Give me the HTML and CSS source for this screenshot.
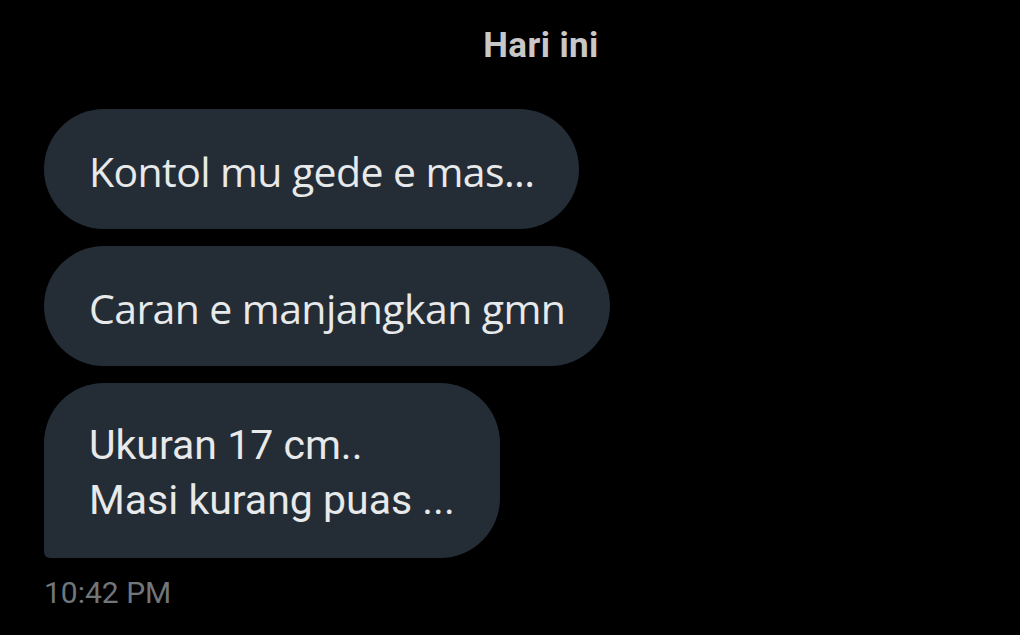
FILE: index.html
```html
<!DOCTYPE html>
<html>
<head>
<meta charset="utf-8">
<link rel="stylesheet" href="styles.css">
</head>
<body>
<main class="chat">
  <div class="day">Hari ini</div>
  <div class="messages">
    <div class="bubble plex">Kontol mu gede e mas...</div>
    <div class="bubble plex">Caran e manjangkan gmn</div>
    <div class="bubble last">Ukuran 17 cm..<br>Masi kurang puas ...</div>
  </div>
  <div class="time">10:42 PM</div>
</main>
</body>
</html>
```
FILE: styles.css
```css
html, body {
  margin: 0;
  padding: 0;
  background: #000;
}
.chat {
  width: 1020px;
  height: 635px;
  box-sizing: border-box;
  padding: 26px 44px 0 44px;
  display: flex;
  flex-direction: column;
  align-items: flex-start;
}
.day {
  align-self: stretch;
  text-align: center;
  padding-left: 62px;
  font-family: Roboto, "Liberation Sans", sans-serif;
  font-weight: 700;
  font-size: 35px;
  letter-spacing: 0.4px;
  line-height: 40px;
  color: #c8c8c8;
}
.messages {
  margin-top: 43px;
  display: flex;
  flex-direction: column;
  align-items: flex-start;
  gap: 17px;
}
.bubble {
  background: #242d35;
  color: #e7e9ea;
  border-radius: 60px;
  padding: 0 45px;
  height: 120px;
  display: flex;
  align-items: center;
  box-sizing: border-box;
}
.plex {
  font-family: "Open Sans", sans-serif;
  font-size: 41px;
  letter-spacing: -0.6px;
  padding-top: 4px;
}
.last {
  height: 175px;
  border-radius: 60px 60px 60px 6px;
  font-family: Roboto, "Liberation Sans", sans-serif;
  font-size: 41px;
  line-height: 55px;
  display: block;
  padding-top: 35px;
}
.time {
  margin-top: 17px;
  font-family: Roboto, "Liberation Sans", sans-serif;
  font-size: 30px;
  line-height: 36px;
  color: #71767b;
}
```
